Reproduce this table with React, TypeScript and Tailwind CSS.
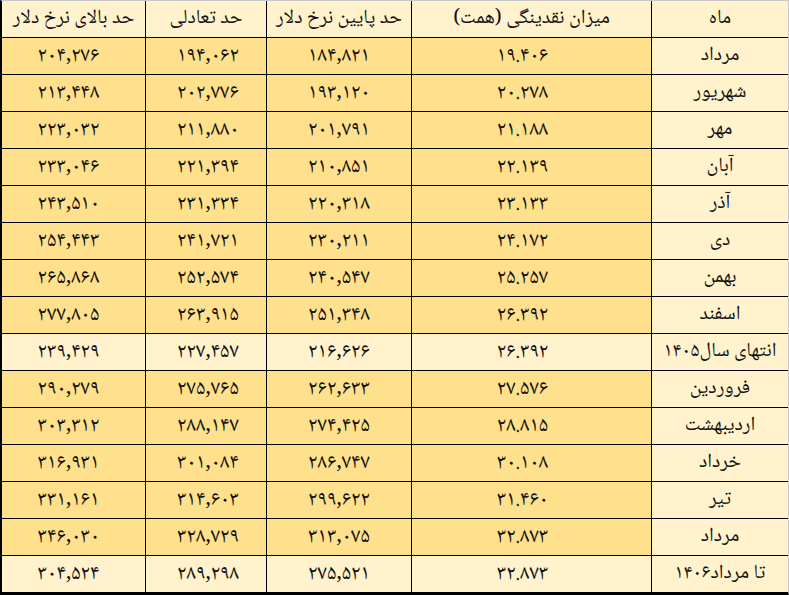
import React from "react";

type Row = { m: string; liq: string; low: string; eq: string; high: string; light?: boolean };

const rows: Row[] = [
  { m: "مرداد", liq: "۱۹.۴۰۶", low: "۱۸۴,۸۲۱", eq: "۱۹۴,۰۶۲", high: "۲۰۴,۲۷۶" },
  { m: "شهریور", liq: "۲۰.۲۷۸", low: "۱۹۳,۱۲۰", eq: "۲۰۲,۷۷۶", high: "۲۱۳,۴۴۸" },
  { m: "مهر", liq: "۲۱.۱۸۸", low: "۲۰۱,۷۹۱", eq: "۲۱۱,۸۸۰", high: "۲۲۳,۰۳۲" },
  { m: "آبان", liq: "۲۲.۱۳۹", low: "۲۱۰,۸۵۱", eq: "۲۲۱,۳۹۴", high: "۲۳۳,۰۴۶" },
  { m: "آذر", liq: "۲۳.۱۳۳", low: "۲۲۰,۳۱۸", eq: "۲۳۱,۳۳۴", high: "۲۴۳,۵۱۰" },
  { m: "دی", liq: "۲۴.۱۷۲", low: "۲۳۰,۲۱۱", eq: "۲۴۱,۷۲۱", high: "۲۵۴,۴۴۳" },
  { m: "بهمن", liq: "۲۵.۲۵۷", low: "۲۴۰,۵۴۷", eq: "۲۵۲,۵۷۴", high: "۲۶۵,۸۶۸" },
  { m: "اسفند", liq: "۲۶.۳۹۲", low: "۲۵۱,۳۴۸", eq: "۲۶۳,۹۱۵", high: "۲۷۷,۸۰۵" },
  { m: "انتهای سال۱۴۰۵", liq: "۲۶.۳۹۲", low: "۲۱۶,۶۲۶", eq: "۲۲۷,۴۵۷", high: "۲۳۹,۴۲۹", light: true },
  { m: "فروردین", liq: "۲۷.۵۷۶", low: "۲۶۲,۶۳۳", eq: "۲۷۵,۷۶۵", high: "۲۹۰,۲۷۹" },
  { m: "اردیبهشت", liq: "۲۸.۸۱۵", low: "۲۷۴,۴۲۵", eq: "۲۸۸,۱۴۷", high: "۳۰۳,۳۱۲" },
  { m: "خرداد", liq: "۳۰.۱۰۸", low: "۲۸۶,۷۴۷", eq: "۳۰۱,۰۸۴", high: "۳۱۶,۹۳۱" },
  { m: "تیر", liq: "۳۱.۴۶۰", low: "۲۹۹,۶۲۲", eq: "۳۱۴,۶۰۳", high: "۳۳۱,۱۶۱" },
  { m: "مرداد", liq: "۳۲.۸۷۳", low: "۳۱۳,۰۷۵", eq: "۳۲۸,۷۲۹", high: "۳۴۶,۰۳۰" },
  { m: "تا مرداد۱۴۰۶", liq: "۳۲.۸۷۳", low: "۲۷۵,۵۲۱", eq: "۲۸۹,۲۹۸", high: "۳۰۴,۵۲۴", light: true },
];

const font = { fontFamily: '"Noto Naskh Arabic", "Noto Sans Arabic", "DejaVu Sans", sans-serif' };

export default function App() {
  const headers = ["ماه", "میزان نقدینگی (همت)", "حد پایین نرخ دلار", "حد تعادلی", "حد بالای نرخ دلار"];
  return (
    <div className="w-[789px] h-[595px] bg-white text-[#111]" style={font}>
      <div className="w-[789px] h-[595px] border-t border-t-[#c8c8c8] border-r border-r-[#c8c8c8] border-l-2 border-l-black border-b-[3px] border-b-black">
        <div dir="rtl" className="grid grid-cols-[137px_240px_145px_121px_143px] grid-rows-[repeat(15,37px)_36px] leading-none">
          {headers.map((h, i) => (
            <div
              key={h}
              className={`bg-[#fff2cc] border-b border-black flex items-center justify-center text-[20px] ${i < 4 ? "border-l" : ""}`}
            >
              {h}
            </div>
          ))}
          {rows.map((r, ri) => {
            const last = ri === rows.length - 1;
            const bg = r.light ? "bg-[#fff2cc]" : "bg-[#ffe08c]";
            const bb = last ? "" : "border-b border-black";
            return (
              <React.Fragment key={ri}>
                <div className={`bg-[#fff2cc] ${bb} border-l border-black flex items-center justify-center text-[20px]`}>{r.m}</div>
                <div className={`${bg} ${bb} border-l border-black flex items-center justify-center pr-[18px] text-[21px]`}>{r.liq}</div>
                <div className={`${bg} ${bb} border-l border-black flex items-center justify-center text-[21px]`}>{r.low}</div>
                <div className={`${bg} ${bb} border-l border-black flex items-center justify-center pl-[4px] text-[21px]`}>{r.eq}</div>
                <div className={`${bg} ${bb} flex items-center justify-center pr-[10px] text-[21px]`}>{r.high}</div>
              </React.Fragment>
            );
          })}
        </div>
      </div>
    </div>
  );
}
